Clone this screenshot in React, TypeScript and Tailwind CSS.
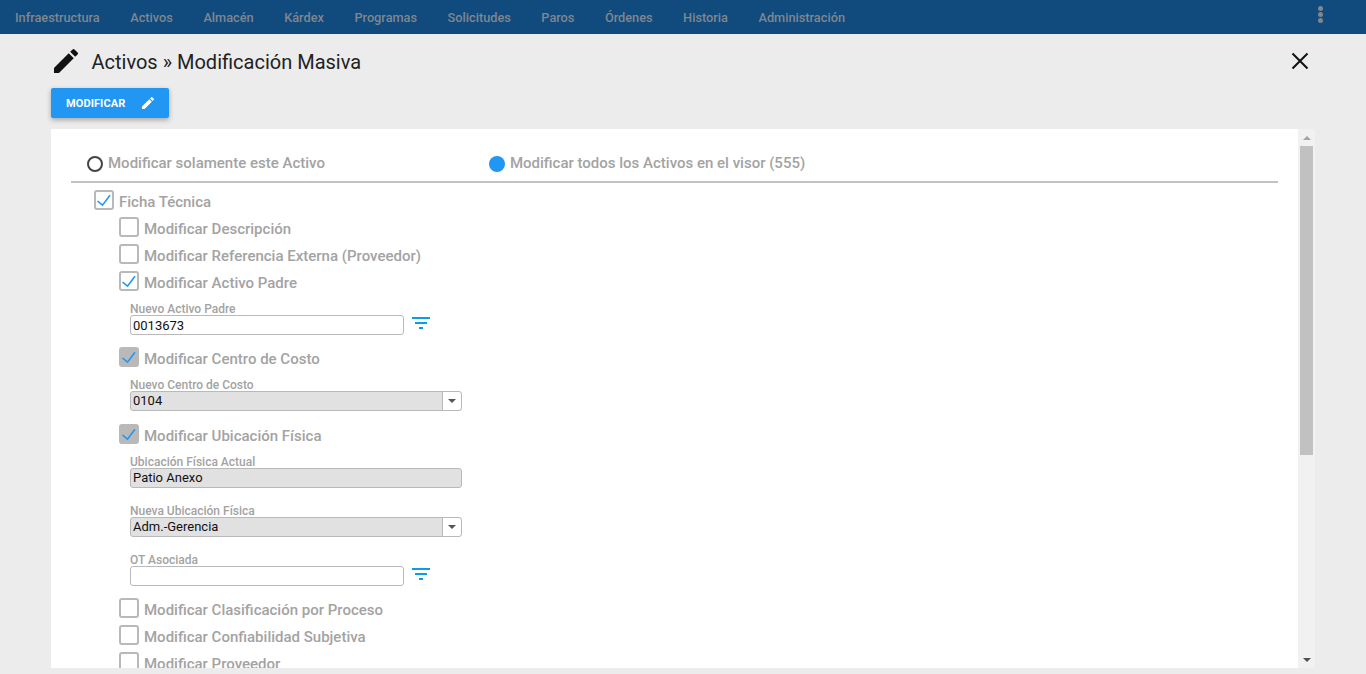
const font = { fontFamily: "Roboto, sans-serif" }

const menu = ["Infraestructura", "Activos", "Almacén", "Kárdex", "Programas", "Solicitudes", "Paros", "Órdenes", "Historia", "Administración"]

function PencilIcon({ className }: { className: string }) {
  return (
    <svg viewBox="0 0 24 24" fill="currentColor" className={className}>
      <path d="M3 17.25V21h3.75L17.81 9.94l-3.75-3.75L3 17.25zM20.71 7.04a1 1 0 0 0 0-1.41l-2.34-2.34a1 1 0 0 0-1.41 0l-1.83 1.83 3.75 3.75 1.83-1.83z" />
    </svg>
  )
}

function FilterIcon() {
  return (
    <svg viewBox="0 0 24 24" fill="#0d9be8" className="mt-[-4px] ml-[5px] h-6 w-6 shrink-0 self-start">
      <path d="M10 18h4v-2h-4v2zM3 6v2h18V6H3zm3 7h12v-2H6v2z" />
    </svg>
  )
}

function Check({ label, checked, disabled, className }: { label: string; checked?: boolean; disabled?: boolean; className: string }) {
  return (
    <div className={`flex h-5 items-center ${className}`}>
      <div className={`flex h-5 w-5 shrink-0 items-center justify-center rounded-[3px] border-2 border-[#b9b9b9] ${disabled ? "bg-[#b9b9b9]" : "bg-white"}`}>
        {checked && (
          <svg viewBox="0 0 16 16" className="h-4 w-4" fill="none" stroke="#2196f3" strokeWidth="1.6">
            <path d="M1.5 9l5 4.2L14 3.3" />
          </svg>
        )}
      </div>
      <span className="ml-[5px] pt-[4px] text-[15px] font-medium text-[#a3a3a3]">{label}</span>
    </div>
  )
}

function FieldLabel({ children }: { children: string }) {
  return <div className="h-[13px] text-[12px] leading-[14px] font-medium text-[#a3a3a3]">{children}</div>
}

function TextBox({ value }: { value?: string }) {
  return (
    <div className="flex h-5 items-center">
      <div className="flex h-5 w-[274px] items-center rounded-[3px] border border-[#b9b9b9] bg-white pl-[2px] pt-[1px] text-[13px] text-[#111]">{value}</div>
      <FilterIcon />
    </div>
  )
}

function SelectBox({ value }: { value: string }) {
  return (
    <div className="flex h-5 w-[332px] items-center rounded-[3px] border border-[#b9b9b9] bg-[#e1e1e1] text-[13px] text-[#111]">
      <span className="flex-1 pl-[2px]">{value}</span>
      <div className="flex h-full w-[19px] items-center justify-center rounded-r-[3px] border-l border-[#b9b9b9] bg-white">
        <div className="h-0 w-0 border-x-[4px] border-t-[4px] border-x-transparent border-t-[#555]" />
      </div>
    </div>
  )
}

export default function App() {
  return (
    <div className="flex h-[674px] w-[1366px] flex-col overflow-hidden bg-[#ececec]" style={font}>
      <nav className="flex h-[34px] shrink-0 items-center gap-[30.5px] bg-[#114a7d] pl-[15px] pr-[43px] text-[12.75px] font-medium text-[#7f8790]">
        {menu.map((name) => (
          <span key={name} className="pt-[1px]">{name}</span>
        ))}
        <div className="ml-auto flex flex-col gap-[1px] pb-[5px]">
          <i className="h-[5px] w-[5px] rounded-full bg-[#7f8790]" />
          <i className="h-[5px] w-[5px] rounded-full bg-[#7f8790]" />
          <i className="h-[5px] w-[5px] rounded-full bg-[#7f8790]" />
        </div>
      </nav>

      <div className="flex min-h-0 flex-1 flex-col pl-[51px] pr-[51px]">
        <div className="flex h-[54px] shrink-0 items-center pt-[2px]">
          <PencilIcon className="ml-[-1px] mb-[2px] h-8 w-8 text-[#111]" />
          <h1 className="ml-[9.5px] text-[20px] font-normal text-[#222]">Activos » Modificación Masiva</h1>
          <svg viewBox="0 0 24 24" className="ml-auto mr-[3px] mb-[3px] h-6 w-6" fill="none" stroke="#111" strokeWidth="2">
            <path d="M4.5 4.5l15 15M19.5 4.5l-15 15" />
          </svg>
        </div>

        <button className="flex h-[30px] w-[118px] shrink-0 items-center rounded-[2px] bg-[#2196f3] pl-[15px] text-[11px] font-bold tracking-[0.1px] text-white shadow-[0_2px_5px_rgba(0,0,0,0.3)]">
          <span className="pt-[2px]">MODIFICAR</span>
          <PencilIcon className="ml-[15px] h-4 w-4" />
        </button>

        <div className="mt-[11px] mb-[6px] flex min-h-0 flex-1">
          <div className="min-w-0 flex-1 overflow-hidden bg-white">
            <div className="mx-[20px] flex h-[54px] items-center border-b-2 border-[#c4c2c2] pt-[17px]">
              <div className="ml-[16px] h-4 w-4 rounded-full border-2 border-[#444]" />
              <span className="ml-[5px] text-[15px] font-medium text-[#a3a3a3]">Modificar solamente este Activo</span>
              <div className="ml-[164px] h-4 w-4 rounded-full bg-[#2196f3]" />
              <span className="ml-[5px] text-[15px] font-medium text-[#a3a3a3]">Modificar todos los Activos en el visor (555)</span>
            </div>

            <Check className="mt-[7px] ml-[43px]" label="Ficha Técnica" checked />
            <Check className="mt-[7px] ml-[68px]" label="Modificar Descripción" />
            <Check className="mt-[7px] ml-[68px]" label="Modificar Referencia Externa (Proveedor)" />
            <Check className="mt-[7px] ml-[68px]" label="Modificar Activo Padre" checked />

            <div className="mt-[11px] ml-[79px]">
              <FieldLabel>Nuevo Activo Padre</FieldLabel>
              <TextBox value="0013673" />
            </div>

            <Check className="mt-[12px] ml-[68px]" label="Modificar Centro de Costo" checked disabled />

            <div className="mt-[11px] ml-[79px]">
              <FieldLabel>Nuevo Centro de Costo</FieldLabel>
              <SelectBox value="0104" />
            </div>

            <Check className="mt-[13px] ml-[68px]" label="Modificar Ubicación Física" checked disabled />

            <div className="mt-[11px] ml-[79px]">
              <FieldLabel>Ubicación Física Actual</FieldLabel>
              <div className="flex h-5 w-[332px] items-center rounded-[3px] border border-[#b9b9b9] bg-[#e1e1e1] pl-[2px] text-[13px] text-[#111]">Patio Anexo</div>
            </div>

            <div className="mt-[16px] ml-[79px]">
              <FieldLabel>Nueva Ubicación Física</FieldLabel>
              <SelectBox value="Adm.-Gerencia" />
            </div>

            <div className="mt-[16px] ml-[79px]">
              <FieldLabel>OT Asociada</FieldLabel>
              <TextBox />
            </div>

            <Check className="mt-[12px] ml-[68px]" label="Modificar Clasificación por Proceso" />
            <Check className="mt-[7px] ml-[68px]" label="Modificar Confiabilidad Subjetiva" />
            <Check className="mt-[7px] ml-[68px]" label="Modificar Proveedor" />
          </div>

          <div className="flex w-[17px] shrink-0 flex-col items-center bg-[#f1f1f1]">
            <div className="flex h-[17px] w-full items-center justify-center">
              <div className="h-0 w-0 border-x-[4px] border-b-[4px] border-x-transparent border-b-[#a3a3a3]" />
            </div>
            <div className="h-[309px] w-[13px] bg-[#c1c1c1]" />
            <div className="mt-auto flex h-[17px] w-full items-center justify-center">
              <div className="h-0 w-0 border-x-[4px] border-t-[4px] border-x-transparent border-t-[#505050]" />
            </div>
          </div>
        </div>
      </div>
    </div>
  )
}
